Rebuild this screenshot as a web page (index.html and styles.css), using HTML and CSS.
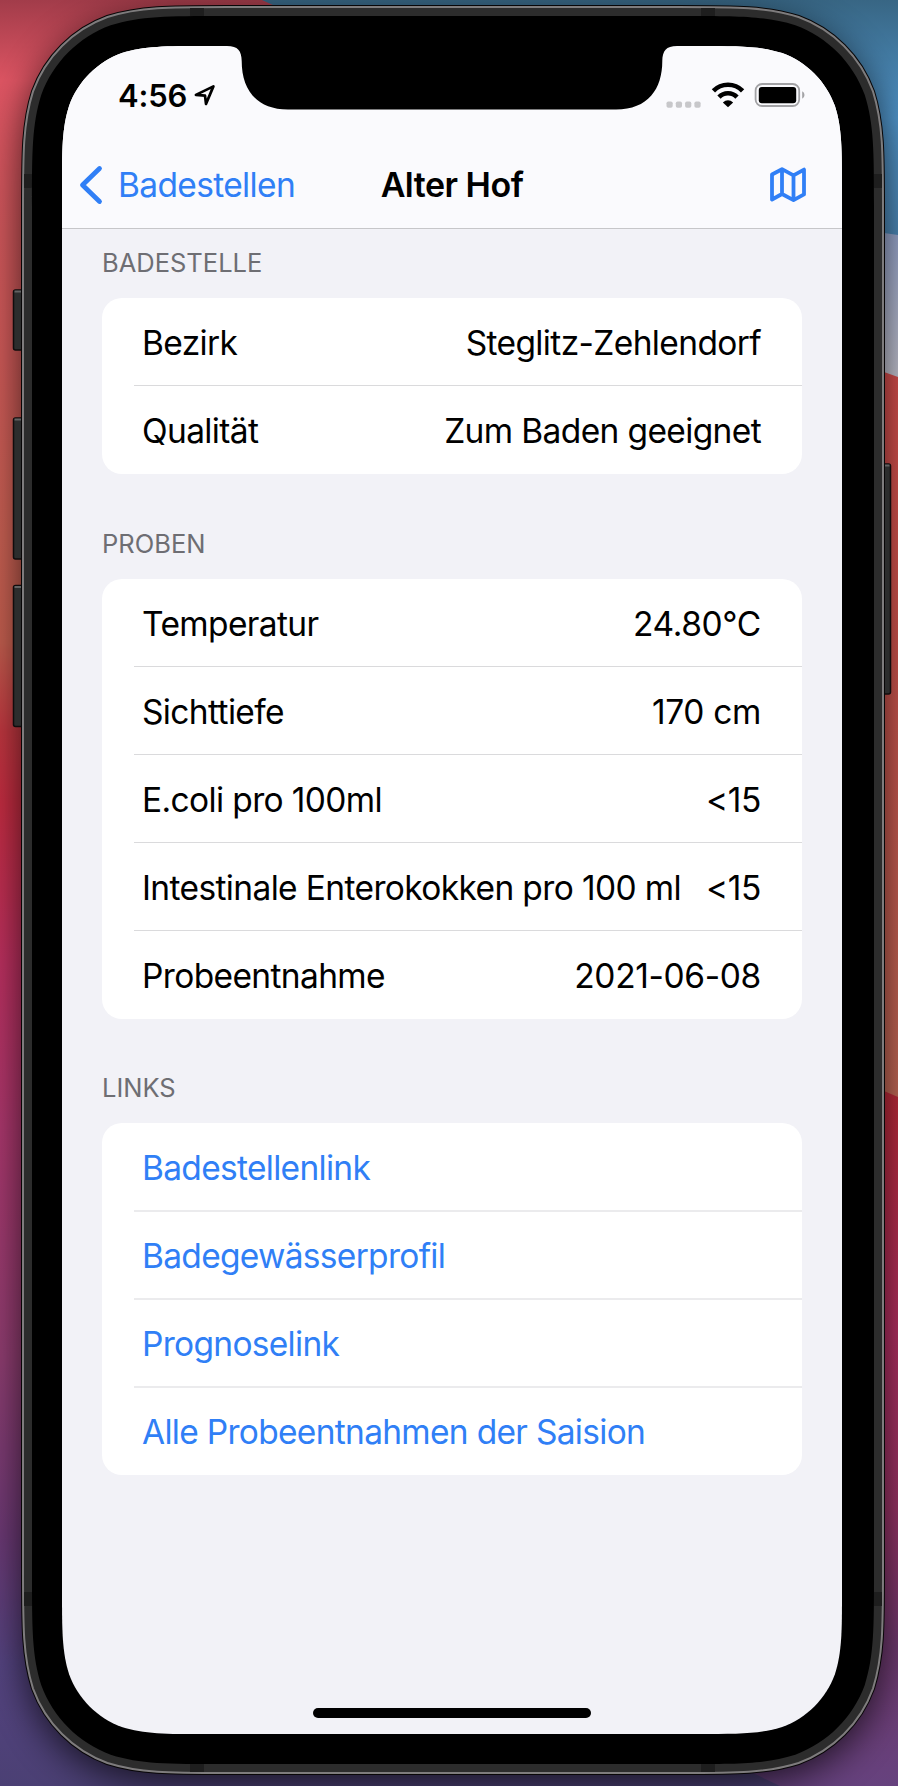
FILE: index.html
```html
<!DOCTYPE html>
<html lang="de">
<head>
<meta charset="utf-8">
<title>Alter Hof</title>
<link rel="stylesheet" href="styles.css">
</head>
<body>
<div class="desktop">
  <svg class="backdrop" viewBox="0 0 898 1786" aria-hidden="true">
    <defs>
      <linearGradient id="left" gradientUnits="userSpaceOnUse" x1="0" y1="0" x2="0" y2="1786">
        <stop offset="0" stop-color="#a23c4a"/>
        <stop offset=".045" stop-color="#dc5462"/>
        <stop offset=".13" stop-color="#cf575b"/>
        <stop offset=".2" stop-color="#cc5957"/>
        <stop offset=".3" stop-color="#c45e51"/>
        <stop offset=".36" stop-color="#bf5c4d"/>
        <stop offset=".41" stop-color="#be363f"/>
        <stop offset=".45" stop-color="#c22c41"/>
        <stop offset=".54" stop-color="#ba305f"/>
        <stop offset=".63" stop-color="#aa376c"/>
        <stop offset=".76" stop-color="#8e3d70"/>
        <stop offset=".86" stop-color="#6b3974"/>
        <stop offset=".93" stop-color="#54437f"/>
        <stop offset="1" stop-color="#4b4074"/>
      </linearGradient>
      <linearGradient id="blue" gradientUnits="userSpaceOnUse" x1="0" y1="0" x2="0" y2="236">
        <stop offset="0" stop-color="#386684"/>
        <stop offset=".5" stop-color="#4f92c6"/>
        <stop offset="1" stop-color="#4d87b5"/>
      </linearGradient>
      <linearGradient id="haze" gradientUnits="userSpaceOnUse" x1="0" y1="232" x2="0" y2="376">
        <stop offset="0" stop-color="#97a5cb"/>
        <stop offset="1" stop-color="#c2c2ce"/>
      </linearGradient>
      <linearGradient id="coral" gradientUnits="userSpaceOnUse" x1="0" y1="372" x2="0" y2="1095">
        <stop offset="0" stop-color="#d44e4d"/>
        <stop offset=".4" stop-color="#ca534d"/>
        <stop offset="1" stop-color="#bf6755"/>
      </linearGradient>
      <linearGradient id="berry" gradientUnits="userSpaceOnUse" x1="0" y1="1090" x2="0" y2="1786">
        <stop offset="0" stop-color="#bb2a39"/>
        <stop offset=".35" stop-color="#b12f61"/>
        <stop offset=".6" stop-color="#983365"/>
        <stop offset=".8" stop-color="#6e396e"/>
        <stop offset="1" stop-color="#66427e"/>
      </linearGradient>
      <filter id="soft" filterUnits="userSpaceOnUse" x="-100" y="-100" width="1100" height="2000">
        <feGaussianBlur stdDeviation="19"/>
      </filter>
      <path id="case" d="M227.4 7H678.6c58.9 0 88.3 0 120 10c34.6 12.6 61.8 39.8 74.4 74.4c10 31.7 10 61.1 10 120V1568.6c0 58.9 0 88.3-10 120c-12.6 34.6-39.8 61.8-74.4 74.4c-31.7 10-61.1 10-120 10H227.4c-58.9 0-88.3 0-120-10c-34.6-12.6-61.8-39.8-74.4-74.4c-10-31.7-10-61.1-10-120V211.4c0-58.9 0-88.3 10-120c12.6-34.6 39.8-61.8 74.4-74.4c31.7-10 61.1-10 120-10z"/>
    </defs>
    <rect width="898" height="1786" fill="url(#left)"/>
    <path d="M262 0L275 6L450 120V240H898V0z" fill="url(#blue)"/>
    <path d="M450 220L884 233L898 235V400H450z" fill="url(#haze)"/>
    <path d="M450 300L884 372L898 377V1120H450z" fill="url(#coral)"/>
    <path d="M600 1030L884 1091L898 1097V1786H780L600 1700z" fill="url(#berry)"/>
    <use href="#case" fill="#000" opacity=".72" filter="url(#soft)" transform="translate(0 10)"/>
    <g fill="#2c2d2d" stroke="#100c0d" stroke-width="1.5">
      <rect x="13.5" y="290" width="14" height="60" rx="2"/>
      <rect x="13.5" y="418" width="14" height="141" rx="2"/>
      <rect x="13.5" y="585.500" width="14" height="141" rx="2"/>
      <rect x="878" y="464" width="12.500" height="230" rx="2"/>
    </g>
    <path d="M14.500 291.500H22M14.500 419.500H22M14.500 587H22M884 465.500H889.500" stroke="#626363" stroke-width="2"/>
    <use href="#case" fill="none" stroke="#080607" stroke-width="4"/>
    <use href="#case" fill="#2c2c2c" stroke="#7e7c7d" stroke-width="2"/>
    <path d="M190 8h14v8h-14zM701 8h14v8h-14zM190 1764h14v8h-14zM701 1764h14v8h-14zM24 174h8v14h-8zM874 174h8v14h-8zM24 1592h8v14h-8zM874 1592h8v14h-8z" fill="#1e1e1e"/>
    <path d="M222.600 16H683.400c54.900 0 82.300 0 111.900 9.300c32.200 11.800 57.600 37.200 69.400 69.400c9.300 29.600 9.300 57 9.300 111.900V1573.400c0 54.900 0 82.300-9.300 111.900c-11.800 32.200-37.200 57.600-69.400 69.400c-29.600 9.300-57 9.300-111.900 9.300H222.600c-54.900 0-82.300 0-111.900-9.300c-32.200-11.800-57.600-37.200-69.400-69.400c-9.300-29.600-9.300-57-9.300-111.900V206.600c0-54.900 0-82.300 9.300-111.900c11.800-32.200 37.200-57.600 69.400-69.400c29.600-9.300 57-9.300 111.900-9.300z"/>
  </svg>

  <div class="screen">
    <svg class="notch" viewBox="0 0 450 66" aria-hidden="true"><path d="M0 0H7C18 0 21.500 5 21.700 15C21.700 43 36 63.500 68 63.500H396C428 63.500 442.300 43 442.300 15C442.500 5 446 0 457 0z"/></svg>
    <header class="top">
      <div class="status">
        <div class="clock">4:56
          <svg class="location" viewBox="0 0 22 22"><path d="M1.900 10.900L19.400 2.400L12 19.900L11 11.700z" fill="none" stroke="#000" stroke-width="2.700" stroke-linejoin="round"/></svg>
        </div>
        <div class="signals">
          <svg class="cell" viewBox="0 0 36 7" fill="#c7c7ca"><rect x=".5" y=".5" width="6.200" height="6.200" rx="1.800"/><rect x="9.800" y=".5" width="6.200" height="6.200" rx="1.800"/><rect x="19.100" y=".5" width="6.200" height="6.200" rx="1.800"/><rect x="28.400" y=".5" width="6.200" height="6.200" rx="1.800"/></svg>
          <svg class="wifi" viewBox="0 0 34 26"><path d="M2.400 8.900A20.400 20.400 0 0 1 31.600 8.900M8 15.100A12.400 12.400 0 0 1 26 15.100" fill="none" stroke="#000" stroke-width="4.600"/><path d="M17 25.300L11.800 20.400Q17 16 22.200 20.400z"/></svg>
          <svg class="battery" viewBox="0 0 52 26"><rect x="1.600" y="2" width="43.600" height="22" rx="6.500" fill="none" stroke="#a2a2a5" stroke-width="1.800"/><rect x="4.800" y="4.900" width="37.400" height="16.400" rx="3"/><path d="M48.200 9.300Q50.500 10.500 50.500 13T48.200 16.700z" fill="#a2a2a5"/></svg>
        </div>
      </div>
      <nav class="navbar">
        <a class="back"><svg class="chevron" viewBox="0 0 24 40"><path d="M20.500 3.500L3.500 20L20.500 36.500" fill="none" stroke="#307ff6" stroke-width="4.800" stroke-linecap="round" stroke-linejoin="round"/></svg><span>Badestellen</span></a>
        <h1 class="title">Alter Hof</h1>
        <svg class="map" viewBox="0 0 36 36"><path d="M2 7.500L12 2.200L23.500 8.400L34 2.600V27.400L23.500 33.200L12 27L2 32.500zM12 2.200V27M23.500 8.400V33.200" fill="none" stroke="#307ff6" stroke-width="3.800" stroke-linejoin="round"/></svg>
      </nav>
    </header>
    <main class="content">
      <section class="group">
        <h2 class="heading">BADESTELLE</h2>
        <div class="card">
          <div class="row"><span>Bezirk</span><span>Steglitz-Zehlendorf</span></div>
          <div class="row"><span>Qualität</span><span>Zum Baden geeignet</span></div>
        </div>
      </section>
      <section class="group samples">
        <h2 class="heading">PROBEN</h2>
        <div class="card">
          <div class="row"><span>Temperatur</span><span class="number">24.80°C</span></div>
          <div class="row"><span>Sichttiefe</span><span class="number">170 cm</span></div>
          <div class="row"><span>E.coli pro 100ml</span><span class="number">&lt;15</span></div>
          <div class="row"><span>Intestinale Enterokokken pro 100 ml</span><span class="number">&lt;15</span></div>
          <div class="row"><span>Probeentnahme</span><span class="number">2021-06-08</span></div>
        </div>
      </section>
      <section class="group">
        <h2 class="heading">LINKS</h2>
        <div class="card links">
          <div class="row"><a>Badestellenlink</a></div>
          <div class="row"><a>Badegewässerprofil</a></div>
          <div class="row"><a>Prognoselink</a></div>
          <div class="row"><a>Alle Probeentnahmen der Saision</a></div>
        </div>
      </section>
    </main>
    <div class="home"></div>
  </div>
</div>
</body>
</html>
```
FILE: styles.css
```css
* { box-sizing: border-box; }
body { margin: 0; font-family: Inter, "Liberation Sans", sans-serif; color: #000; }
h1, h2 { margin: 0; font-weight: 400; }
svg { display: block; flex: none; }
.desktop { position: relative; width: 898px; height: 1786px; padding: 46px 56px 52px 62px; overflow: hidden; }
.backdrop { position: absolute; inset: 0; width: 898px; height: 1786px; }
.screen {
  position: relative; width: 780px; height: 1688px; background: #f2f2f7;
  display: flex; flex-direction: column;
  clip-path: path("M144.8 0H635.2c41.7 0 62.6 0 85 7.1c24.5 8.9 43.8 28.2 52.7 52.7c7.1 22.4 7.1 43.300 7.1 85V1543.2c0 41.7 0 62.6-7.1 85c-8.9 24.5-28.2 43.8-52.7 52.700c-22.4 7.1-43.3 7.1-85 7.1H144.8c-41.700 0-62.6 0-85-7.1c-24.5-8.9-43.8-28.2-52.700-52.7c-7.1-22.4-7.1-43.3-7.1-85V144.8c0-41.7 0-62.6 7.1-85c8.9-24.5 28.2-43.8 52.7-52.7c22.4-7.1 43.3-7.1 85-7.1z");
}
.notch { position: absolute; left: 158px; top: 0; width: 450px; height: 66px; overflow: visible; }
.top { height: 183px; background: #fafafd; border-bottom: 1px solid #c6c6c9; }
.status { display: flex; justify-content: space-between; height: 94px; padding: 32px 36px 0 56px; }
.clock { display: flex; align-items: center; gap: 7px; height: 34px; font-size: 31px; font-weight: 600; letter-spacing: -.2px; }
.location { width: 22px; height: 22px; }
.signals { display: flex; align-items: flex-end; height: 32px; padding-bottom: 2px; }
.cell { width: 36px; height: 7px; margin-right: 9px; }
.wifi { width: 34px; height: 26px; margin-right: 9px; }
.battery { width: 52px; height: 26px; }
.navbar { display: grid; grid-template-columns: 1fr auto 1fr; align-items: center; height: 88px; padding: 1px 17px 0; font-size: 33.5px; }
.back { display: flex; align-items: center; gap: 15px; color: #307ff6; letter-spacing: -.65px; }
.chevron { width: 24px; height: 40px; }
.title { font-size: 34px; font-weight: 600; letter-spacing: -.5px; }
.map { width: 36px; height: 36px; justify-self: end; margin-right: 19px; }
.content { flex: 1; padding: 12px 40px 0; }
.group { margin-bottom: 48px; }
.samples { margin-bottom: 47px; }
.heading { height: 57px; padding-top: 7px; font-size: 25.5px; line-height: 30px; color: #6e6e73; letter-spacing: 0; }
.card { background: #fff; border-radius: 20px; overflow: hidden; }
.row { position: relative; display: flex; justify-content: space-between; align-items: center; height: 88px; padding: 2px 41px 0 40px; font-size: 33.5px; letter-spacing: -.63px; white-space: nowrap; }
.row:not(:last-child)::after { content: ""; position: absolute; left: 32px; right: 0; bottom: 0; height: 1px; background: #dadadc; }
.number { letter-spacing: -.35px; }
.links { color: #307ff6; }
.links .row { letter-spacing: -.7px; }
.links .row:not(:last-child)::after { bottom: -1px; height: 2px; background: #ebebed; z-index: 1; }
.home { width: 278px; height: 10px; margin: 0 auto 16px; border-radius: 5px; background: #000; }
```
